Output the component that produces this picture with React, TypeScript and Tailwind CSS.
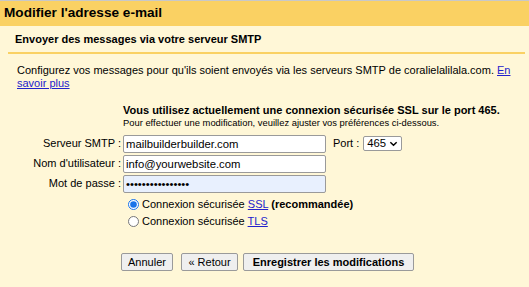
import React from 'react';

const inputCls =
  'h-[18px] w-[203px] rounded-[2px] border border-[#9a9a9a] bg-white px-[2px] text-[11.3px] text-black outline-none';

const buttonCls =
  'h-[18px] rounded-[2px] border border-[#9a9a9a] bg-[#efefef] text-[11px] leading-[16px] text-black';

const FieldRow: React.FC<{ label: string; children: React.ReactNode }> = ({ label, children }) => (
  <div className="flex h-[20px] items-center">
    <div className="w-[121px] text-right">{label} :</div>
    <div className="ml-[2px] flex items-center">{children}</div>
  </div>
);

export default function App() {
  return (
    <div className="h-[287px] w-[529px] overflow-hidden bg-[#fff7d7] font-['Liberation_Sans',Arial,sans-serif] text-[11px] text-black">
      <div className="h-[26px] border-t border-[#c8c8c8] bg-[#fad163] pl-[4px] text-[13.6px] font-bold leading-[24px]">
        Modifier l'adresse e-mail
      </div>

      <div className="ml-[8px] mr-[4px] flex h-[28px] items-center border-b-2 border-[#fad163] pl-[7px] font-bold">
        Envoyer des messages via votre serveur SMTP
      </div>

      <p className="pl-[17px] pr-[8px] pt-[10px] leading-[12.5px]">
        Configurez vos messages pour qu'ils soient envoyés via les serveurs SMTP de coralielalilala.com.{' '}
        <a href="#" className="text-[#2222cc] underline">
          En savoir plus
        </a>
      </p>

      <div className="ml-[123px] mt-[15px]">
        <div className="font-bold leading-[12.5px]">
          Vous utilisez actuellement une connexion sécurisée SSL sur le port 465.
        </div>
        <div className="text-[9.4px] leading-[11px]">
          Pour effectuer une modification, veuillez ajuster vos préférences ci-dessous.
        </div>
      </div>

      <div className="mt-[6px]">
        <FieldRow label="Serveur SMTP">
          <input readOnly className={inputCls} value="mailbuilderbuilder.com" />
          <span className="ml-[7px]">Port :</span>
          <div className="ml-[4px] flex h-[15px] w-[39px] items-center rounded-[2px] border border-[#9a9a9a] bg-white pl-[3px] text-[11.3px]">
            465
            <svg viewBox="0 0 10 10" className="ml-[3px] h-[9px] w-[9px]">
              <path d="M1.5 3.5 L5 7 L8.5 3.5" fill="none" stroke="#000" strokeWidth="1.6" />
            </svg>
          </div>
        </FieldRow>
        <FieldRow label="Nom d'utilisateur">
          <input readOnly className={inputCls} value="info@yourwebsite.com" />
        </FieldRow>
        <FieldRow label="Mot de passe">
          <input
            readOnly
            className={`${inputCls} !bg-[#e8f0fe]`}
            value={'\u2022'.repeat(16)}
          />
        </FieldRow>
      </div>

      <div className="ml-[128px] mt-[5px] flex flex-col gap-[5px]">
        <label className="flex h-[12px] items-center">
          <input type="radio" name="conn" defaultChecked className="m-0 h-[11px] w-[11px] accent-[#1a73e8]" />
          <span className="ml-[3px]">
            Connexion sécurisée{' '}
            <a href="#" className="text-[#2222cc] underline">
              SSL
            </a>{' '}
            <b>(recommandée)</b>
          </span>
        </label>
        <label className="flex h-[12px] items-center">
          <input type="radio" name="conn" className="m-0 h-[11px] w-[11px]" />
          <span className="ml-[3px]">
            Connexion sécurisée{' '}
            <a href="#" className="text-[#2222cc] underline">
              TLS
            </a>
          </span>
        </label>
      </div>

      <div className="ml-[121px] mt-[25px] flex">
        <button className={`${buttonCls} w-[52px]`}>Annuler</button>
        <button className={`${buttonCls} ml-[8px] w-[57px]`}>« Retour</button>
        <button className={`${buttonCls} ml-[5px] w-[171px] font-bold`}>Enregistrer les modifications</button>
      </div>
    </div>
  );
}
